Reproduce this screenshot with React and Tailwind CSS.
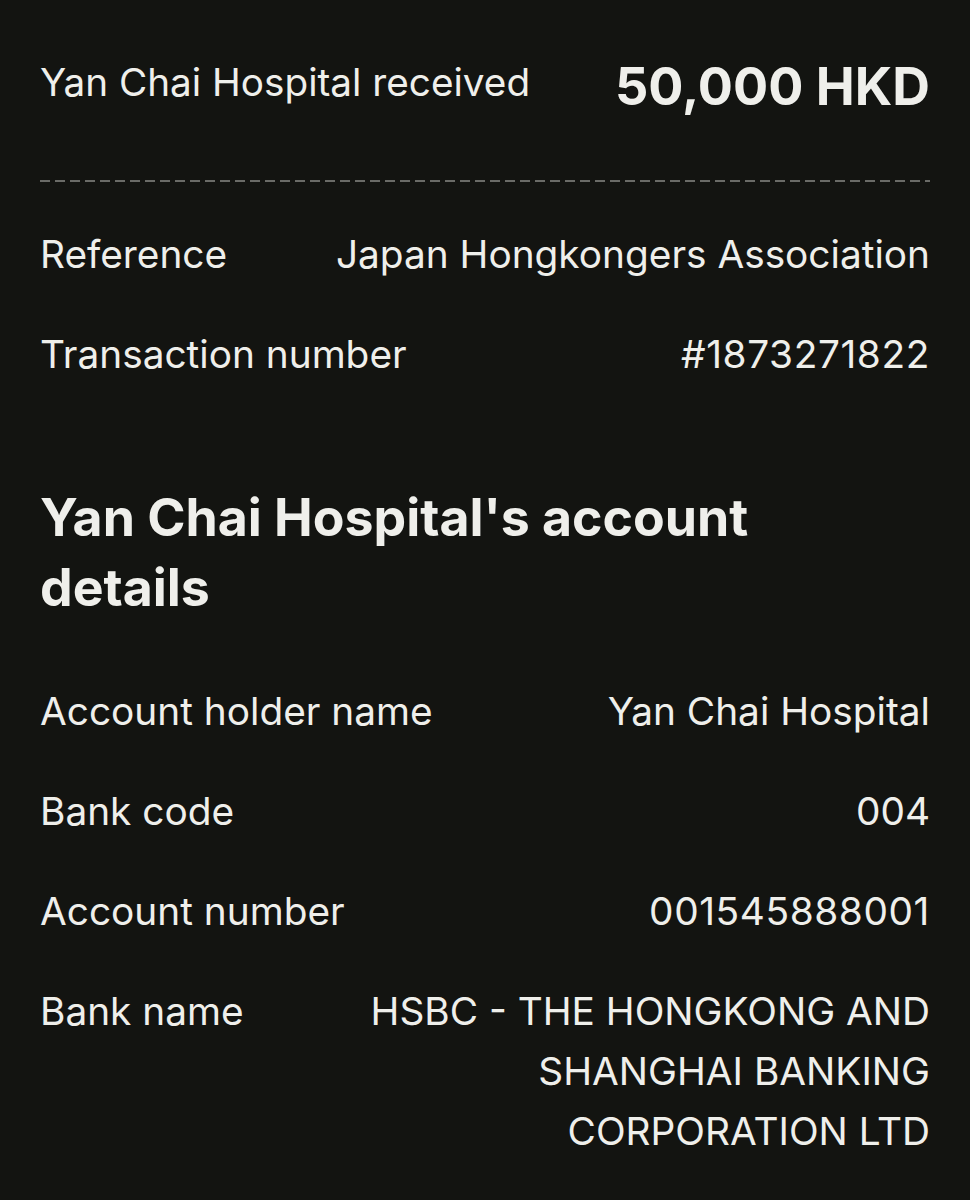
export default function App() {
  const font = { fontFamily: "Inter, 'Noto Sans', sans-serif" };
  const Row = ({ label, value, num }) => (
    <div className="flex justify-between gap-8 text-[38.8px] leading-[60px]">
      <div className="shrink-0">{label}</div>
      <div className={num ? "text-right tracking-[0.6px]" : "text-right"}>{value}</div>
    </div>
  );
  return (
    <div
      className="w-[970px] h-[1200px] bg-[#131411] text-[#efefeb] px-10 pt-[52px] overflow-hidden"
      style={font}
    >
      <div className="flex justify-between items-start">
        <div className="text-[38.7px] leading-[60px]">Yan Chai Hospital received</div>
        <div className="text-[52.2px] leading-[68px] font-bold">50,000 HKD</div>
      </div>
      <div className="mt-[60px] h-[2px] bg-[repeating-linear-gradient(to_right,#6a6b67_0_10px,transparent_10px_15px)]" />
      <div className="mt-[42px] flex flex-col gap-10">
        <Row label="Reference" value="Japan Hongkongers Association" />
        <Row label="Transaction number" value="#1873271822" num />
      </div>
      <h2 className="mt-[98px] text-[51.8px] leading-[70px] font-bold w-[780px]">
        Yan Chai Hospital's account details
      </h2>
      <div className="mt-[59px] flex flex-col gap-10">
        <Row label="Account holder name" value="Yan Chai Hospital" />
        <Row label="Bank code" value="004" />
        <Row label="Account number" value="001545888001" num />
        <div className="flex justify-between gap-8 text-[38.8px] leading-[60px]">
          <div className="shrink-0">Bank name</div>
          <div className="text-right w-[600px]">
            HSBC - THE HONGKONG AND<br />SHANGHAI BANKING<br />CORPORATION LTD
          </div>
        </div>
      </div>
    </div>
  );
}
